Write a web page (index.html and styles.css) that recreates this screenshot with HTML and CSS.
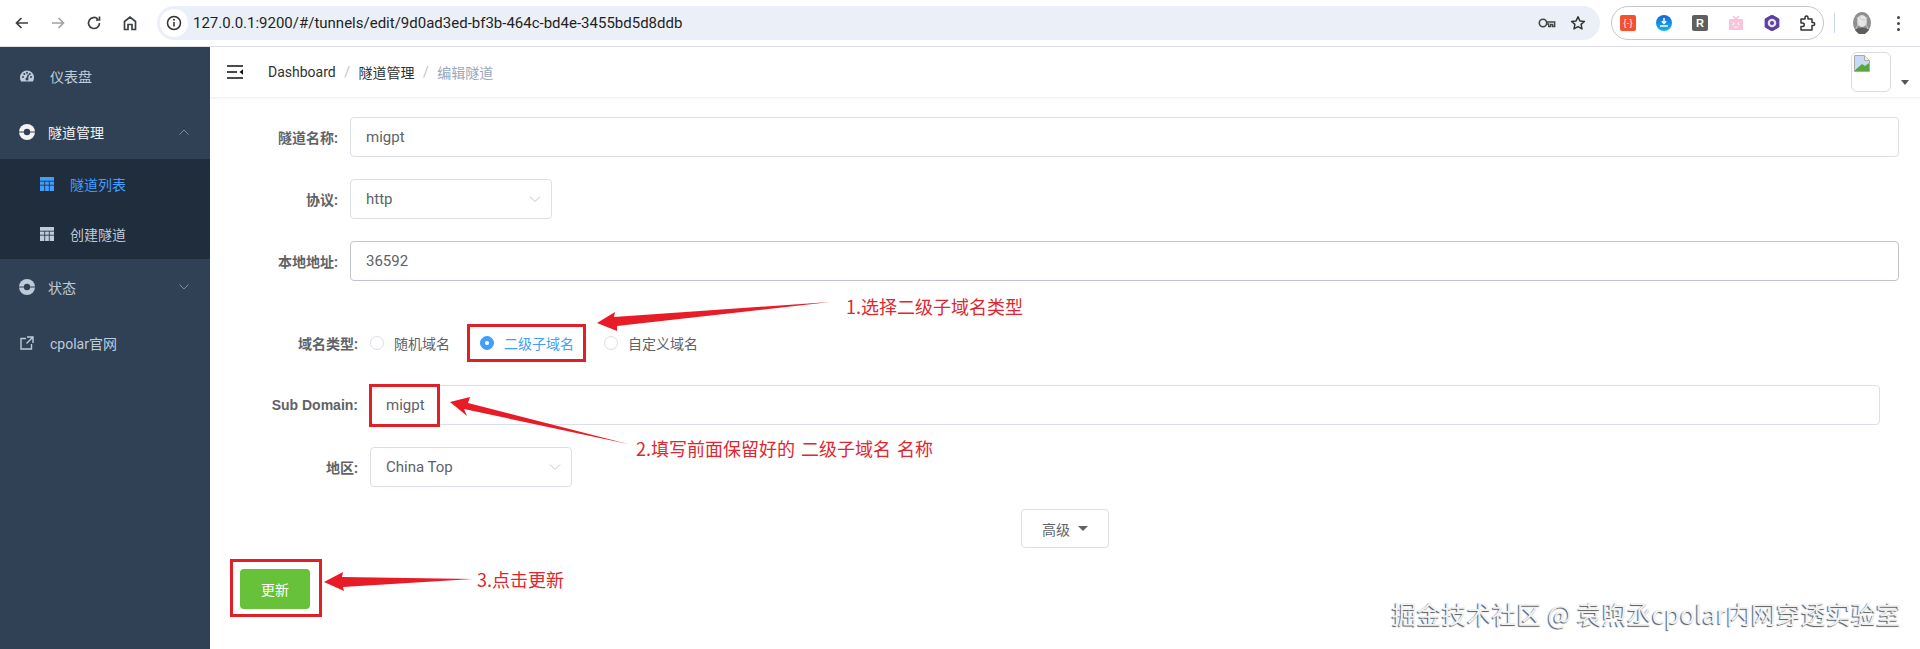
FILE: index.html
```html
<!DOCTYPE html>
<html lang="zh">
<head>
<meta charset="utf-8">
<title>cpolar</title>
<link rel="stylesheet" href="styles.css">
</head>
<body>
<div class="toolbar">
  <div class="nav-btn"><svg width="16" height="16" viewBox="0 0 16 16" class="ic"><path d="M14 8H2.500M7.500 3L2.500 8l5 5"/></svg></div>
  <div class="nav-btn dim"><svg width="16" height="16" viewBox="0 0 16 16" class="ic"><path d="M2 8h11.500M8.500 3l5 5-5 5"/></svg></div>
  <div class="nav-btn"><svg width="16" height="16" viewBox="0 0 16 16" class="ic"><path d="M13.500 8a5.500 5.500 0 1 1-1.700-4M13.500 1.500V5H10"/></svg></div>
  <div class="nav-btn"><svg width="16" height="16" viewBox="0 0 16 16" class="ic"><path d="M2.500 14.500V6.500L8 2l5.500 4.500v8H10V9.500H6v5z"/></svg></div>
  <div class="address">
    <div class="info-chip"><svg width="16" height="16" viewBox="0 0 16 16"><circle cx="8" cy="8" r="6.500" fill="none" stroke="#333" stroke-width="1.500"/><path d="M8 7v4.500" stroke="#333" stroke-width="1.600"/><circle cx="8" cy="4.800" r="1" fill="#333"/></svg></div>
    <span class="url">127.0.0.1:9200/#/tunnels/edit/9d0ad3ed-bf3b-464c-bd4e-3455bd5d8ddb</span>
    <svg class="key" width="18" height="14" viewBox="0 0 18 14"><circle cx="5" cy="7" r="3.700" fill="none" stroke="#444" stroke-width="1.600"/><path d="M8.700 6h8v4.500h-2V8.500h-2v2h-2V8h-2" fill="none" stroke="#444" stroke-width="1.400"/></svg>
    <svg class="star" width="16" height="16" viewBox="0 0 16 16"><path d="M8 1.800l1.900 4.100 4.500.5-3.300 3 .9 4.500L8 11.600l-4 2.300.9-4.500-3.300-3 4.500-.5z" fill="none" stroke="#333" stroke-width="1.500" stroke-linejoin="round"/></svg>
  </div>
  <div class="ext-pill">
    <div class="ext ext-red">{-}</div>
    <svg class="ext-svg" width="16" height="16" viewBox="0 0 16 16"><defs><linearGradient id="bl" x1="0" y1="0" x2="0" y2="1"><stop offset="0" stop-color="#1a66d8"/><stop offset="1" stop-color="#12b4f4"/></linearGradient></defs><circle cx="8" cy="8" r="8" fill="url(#bl)"/><path d="M8 3v5M5.800 6.200L8 8.500l2.200-2.300M4 11h8" stroke="#fff" stroke-width="1.500" fill="none"/></svg>
    <div class="ext ext-gray">R</div>
    <svg class="ext-svg" width="16" height="16" viewBox="0 0 16 16"><path d="M5 1l3 3 3-3" fill="none" stroke="#f6bcd2" stroke-width="1.300"/><rect x="1" y="4" width="14" height="11" rx="1.500" fill="#f9c4d8"/><path d="M4.500 7.500l2 1.200-2 1.200M11.500 7.500l-2 1.200 2 1.200M6 12h4" stroke="#fff" stroke-width="1" fill="none"/></svg>
    <svg class="ext-svg" width="16" height="16" viewBox="0 0 16 16"><path d="M8 0l6.900 4v8L8 16l-6.900-4V4z" fill="#5b3fa0" stroke="#5b3fa0" stroke-linejoin="round"/><circle cx="8" cy="8" r="4.300" fill="#e8e2f4"/><circle cx="8" cy="8" r="2" fill="#5b3fa0"/></svg>
    <svg class="ext-svg" width="16" height="16" viewBox="0 0 16 16"><path d="M1 4h4V2.500a1.500 1.500 0 0 1 3 0V4h4v3.500h1.200a1.500 1.500 0 0 1 0 3H12V15H1v-3.500h1.500a1.500 1.500 0 0 0 0-3.500H1z" fill="none" stroke="#333" stroke-width="1.500" stroke-linejoin="round"/></svg>
  </div>
  <div class="divider"></div>
  <svg class="avatar" width="20" height="24" viewBox="0 0 20 24"><ellipse cx="10" cy="12" rx="9" ry="11" fill="#8f8f8f"/><ellipse cx="10" cy="10" rx="5" ry="6" fill="#e6e6e6"/><path d="M3 19c2-3 12-3 14 0l-4 4H7z" fill="#5d5d5d"/><path d="M5 6c2 6 0 10-1 12M15 6c-2 6 0 10 1 12M7 5c1 3 3 4 6 4" stroke="#c9c9c9" fill="none"/></svg>
  <div class="kebab"><i></i><i></i><i></i></div>
</div>

<div class="app">
  <aside class="sidebar">
    <div class="menu-item">
      <svg class="mi" width="14" height="14" viewBox="0 0 14 14"><path d="M7 1.500a7 7 0 0 0-7 7c0 1.500.4 2.900 1.100 4h11.800c.7-1.100 1.100-2.500 1.100-4a7 7 0 0 0-7-7z" fill="#bfcbd9"/><g fill="#304156"><circle cx="3" cy="8" r="1"/><circle cx="4.300" cy="5" r="1"/><circle cx="7" cy="3.800" r="1"/><circle cx="11" cy="8" r="1"/><circle cx="9.800" cy="5" r="1"/></g><path d="M7 10l1.500-4.500" stroke="#304156" stroke-width="1.500"/><circle cx="7" cy="10" r="1.500" fill="#304156"/></svg>
      <span class="mi-text">仪表盘</span>
    </div>
    <div class="menu-item parent active-parent">
      <svg class="mi ring" width="16" height="16" viewBox="0 0 16 16"><circle cx="8" cy="8" r="8" fill="#f4f4f5"/><circle cx="8" cy="8" r="3.200" fill="#304156"/><path d="M0 8h5M11 8h5" stroke="#304156" stroke-width="1"/></svg>
      <span class="mi-text strong">隧道管理</span>
      <svg class="chev" width="12" height="8" viewBox="0 0 12 8"><path d="M1.500 6.500L6 2l4.500 4.500" fill="none" stroke="#7f8c9c" stroke-width="1"/></svg>
    </div>
    <div class="submenu">
      <div class="sub-item active">
        <svg class="si" width="14" height="14" viewBox="0 0 14 14"><rect width="14" height="14" fill="#409eff"/><path d="M0 4.200h14M0 8.200h14M4.700 4v10M9.300 4v10" stroke="#1f2d3d" stroke-width=".8"/></svg>
        <span>隧道列表</span>
      </div>
      <div class="sub-item">
        <svg class="si" width="14" height="14" viewBox="0 0 14 14"><rect width="14" height="14" fill="#bfcbd9"/><path d="M0 4.200h14M0 8.200h14M4.700 4v10M9.300 4v10" stroke="#1f2d3d" stroke-width=".8"/></svg>
        <span>创建隧道</span>
      </div>
    </div>
    <div class="menu-item parent">
      <svg class="mi ring" width="16" height="16" viewBox="0 0 16 16"><circle cx="8" cy="8" r="8" fill="#bfcbd9"/><circle cx="8" cy="8" r="3.200" fill="#304156"/><path d="M0 8h5M11 8h5" stroke="#304156" stroke-width="1"/></svg>
      <span class="mi-text strong-off">状态</span>
      <svg class="chev" width="12" height="8" viewBox="0 0 12 8"><path d="M1.500 1.500L6 6l4.500-4.500" fill="none" stroke="#7f8c9c" stroke-width="1"/></svg>
    </div>
    <div class="menu-item">
      <svg class="mi" width="14" height="14" viewBox="0 0 14 14"><path d="M6 2.500H1v10.500h10.500V8M7 1h6v6M13 1L6.500 7.500" fill="none" stroke="#bfcbd9" stroke-width="1.400"/></svg>
      <span class="mi-text">cpolar官网</span>
    </div>
  </aside>

  <main class="main">
    <header class="navbar">
      <svg class="hamburger" width="16" height="14" viewBox="0 0 16 14"><path d="M0 1h16M0 7h10M0 13h16" stroke="#111" stroke-width="1.500"/><path d="M16 4.200L12.500 7l3.500 2.800z" fill="#111"/></svg>
      <nav class="crumbs">
        <span>Dashboard</span><i>/</i><span>隧道管理</span><i>/</i><span class="last">编辑隧道</span>
      </nav>
      <div class="user">
        <div class="user-img">
          <svg width="16" height="17" viewBox="0 0 16 17"><path d="M.5.500h10l5 5v11H.5z" fill="#fff" stroke="#a9a9a9"/><path d="M1 1h9v5h5v3L8 14H1z" fill="#c6dcf5"/><path d="M1 15l7-6 3 2 4-3v8H1z" fill="#5aa83c"/><path d="M10.500.500v5h5" fill="#eee" stroke="#a9a9a9"/></svg>
        </div>
        <span class="user-caret"></span>
      </div>
    </header>

    <form class="form">
      <div class="row">
        <label class="lbl">隧道名称:</label>
        <div class="input">migpt</div>
      </div>
      <div class="row">
        <label class="lbl">协议:</label>
        <div class="input select">http<svg class="sel-chev" width="12" height="8" viewBox="0 0 12 8"><path d="M1 1.500L6 6.500l5-5" fill="none" stroke="#c0c4cc" stroke-width="1"/></svg></div>
      </div>
      <div class="row">
        <label class="lbl">本地地址:</label>
        <div class="input hover">36592</div>
      </div>
      <div class="row radio-row">
        <label class="lbl wide">域名类型:</label>
        <div class="radios">
          <span class="radio"><i class="dot"></i>随机域名</span>
          <span class="radio on"><i class="dot"></i>二级子域名</span>
          <span class="radio"><i class="dot"></i>自定义域名</span>
        </div>
      </div>
      <div class="row wide-row">
        <label class="lbl wide bold">Sub Domain:</label>
        <div class="input">migpt</div>
      </div>
      <div class="row wide-row">
        <label class="lbl wide">地区:</label>
        <div class="input select sel-wide">China Top<svg class="sel-chev" width="12" height="8" viewBox="0 0 12 8"><path d="M1 1.500L6 6.500l5-5" fill="none" stroke="#c0c4cc" stroke-width="1"/></svg></div>
      </div>
      <div class="adv-wrap">
        <div class="adv">高级<span class="adv-caret"></span></div>
      </div>
      <div class="submit-wrap"><div class="submit">更新</div></div>
    </form>
  </main>
</div>

<svg class="marks" width="1920" height="649" viewBox="0 0 1920 649">
  <g fill="none" stroke="#e01f26" stroke-width="3">
    <rect x="468.500" y="325.500" width="116" height="35"/>
    <rect x="370.500" y="385.500" width="68" height="40"/>
    <rect x="231.500" y="560.500" width="89" height="55"/>
  </g>
  <g fill="#e81c26">
    <polygon points="597,323 615,312 614,317 830,302 617,326 617,331"/>
    <polygon points="450,402 470,397 468,403 628,444 464,409 467,416"/>
    <polygon points="324,582 343,572 342,577 473,579 343,587 344,591"/>
  </g>
</svg>
<div class="note note1">1.选择二级子域名类型</div>
<div class="note note2">2.填写前面保留好的 二级子域名 名称</div>
<div class="note note3">3.点击更新</div>
<div class="watermark">掘金技术社区 @ 袁煦丞cpolar内网穿透实验室</div>
</body>
</html>
```
FILE: styles.css
```css
* { box-sizing: border-box; }
html, body { margin: 0; height: 649px; overflow: hidden; }
body {
  position: relative;
  background: #fff;
  font-family: Roboto, "Noto Sans CJK SC", sans-serif;
  font-size: 14px;
  color: #606266;
}

/* browser toolbar */
.toolbar {
  height: 47px;
  display: flex;
  align-items: center;
  padding-left: 4px;
  background: #fff;
  border-bottom: 1px solid #dcdfe4;
}
.nav-btn { width: 36px; display: flex; justify-content: center; }
.ic { fill: none; stroke: #3c4043; stroke-width: 1.700; }
.dim .ic { stroke: #a0a4a8; }
.address {
  margin-left: 9px;
  width: 1443px;
  height: 34px;
  border-radius: 17px;
  background: #ebf0f8;
  display: flex;
  align-items: center;
}
.info-chip {
  width: 28px; height: 28px; margin-left: 3px;
  border-radius: 50%; background: #fff;
  display: flex; align-items: center; justify-content: center;
}
.url { margin-left: 5px; color: #1f1f1f; font-size: 15px; }
.key { margin-left: auto; }
.star { margin-left: 14px; margin-right: 14px; }
.ext-pill {
  margin-left: 11px;
  width: 213px; height: 34px;
  border: 1px solid #c4c7cb;
  border-radius: 17px;
  display: flex;
  align-items: center;
  gap: 20px;
  padding-left: 8px;
}
.ext {
  width: 16px; height: 16px; border-radius: 2px;
  display: flex; align-items: center; justify-content: center;
  color: #fff; font-size: 10px; font-family: "Liberation Sans", sans-serif;
}
.ext-red { background: #f4512c; font-size: 9px; }
.ext-gray { background: #5f5f5f; font-weight: 700; font-size: 11px; }
.ext-svg { display: block; }
.divider { width: 1px; height: 20px; margin-left: 10px; background: #c9d7ea; }
.avatar { margin-left: 17px; }
.kebab { margin-left: 25px; display: flex; flex-direction: column; gap: 3px; }
.kebab i { width: 3px; height: 3px; border-radius: 50%; background: #444; }

/* app */
.app { display: flex; height: 602px; }
.sidebar { width: 210px; flex: none; background: #304156; padding-top: 1px; }
.menu-item {
  height: 56px;
  display: flex;
  align-items: center;
  padding-left: 20px;
  color: #bfcbd9;
  position: relative;
}
.menu-item.active-parent { height: 55px; }
.mi { flex: none; }
.ring { margin-left: -1px; }
.mi-text { margin-left: 16px; }
.strong, .strong-off { margin-left: 13px; }
.strong { color: #f4f4f5; }
.chev { margin-left: auto; margin-right: 20px; }
.submenu { background: #1f2d3d; }
.sub-item {
  height: 50px;
  display: flex;
  align-items: center;
  padding-left: 40px;
  color: #bfcbd9;
  gap: 16px;
}
.sub-item.active { color: #409eff; }

.main { flex: 1; min-width: 0; }
.navbar {
  height: 51px;
  display: flex;
  align-items: center;
  padding-left: 17px;
  border-bottom: 1px solid #f0f2f5;
  box-shadow: 0 1px 3px rgba(0, 21, 41, .04);
}
.hamburger { flex: none; }
.crumbs { margin-left: 25px; display: flex; align-items: center; color: #303133; }
.crumbs i { font-style: normal; color: #c0c4cc; margin: 0 8.500px; }
.crumbs .last { color: #97a8be; }
.user { margin-left: auto; display: flex; align-items: flex-end; padding-right: 11px; height: 40px; }
.user-img {
  width: 40px; height: 40px;
  border: 1px solid #dcdcdc;
  border-radius: 6px;
  padding: 2px 0 0 2px;
}
.user-img svg { display: block; }
.user-caret {
  margin-left: 10px; margin-bottom: 7px;
  border: 4px solid transparent; border-top: 5px solid #555; border-bottom: 0;
}

/* form */
.form { padding-top: 19px; }
.row { display: flex; align-items: center; height: 40px; margin-bottom: 22px; padding-right: 21px; }
.lbl { width: 140px; flex: none; padding-right: 12px; text-align: right; font-weight: 700; color: #606266; font-size: 14px; white-space: nowrap; }
.lbl.wide { width: 160px; }
.lbl.bold { font-family: "Liberation Sans", sans-serif; font-size: 14px; }
.input {
  flex: 1;
  height: 40px;
  line-height: 38px;
  border: 1px solid #dcdfe6;
  border-radius: 4px;
  padding-left: 15px;
  color: #606266;
  font-size: 15px;
  background: #fff;
}
.input.hover { border-color: #c0c4cc; }
.select { flex: none; width: 202px; position: relative; }
.sel-chev { position: absolute; right: 10px; top: 15px; }
.wide-row { padding-right: 40px; }
.radio-row { margin-top: 42px; }
.radios { display: flex; gap: 30px; }
.radio { display: flex; align-items: center; gap: 10px; font-size: 14px; color: #606266; }
.dot {
  width: 14px; height: 14px; border-radius: 50%;
  border: 1px solid #dcdfe6; background: #fff;
}
.radio.on { color: #409eff; }
.radio.on .dot { background: #409eff; border-color: #409eff; position: relative; }
.radio.on .dot::after {
  content: ""; position: absolute; left: 4px; top: 4px;
  width: 4px; height: 4px; border-radius: 50%; background: #fff;
}
.adv-wrap { display: flex; justify-content: flex-start; padding-left: 811px; }
.adv {
  width: 88px; height: 39px;
  border: 1px solid #dcdfe6; border-radius: 4px;
  display: flex; align-items: center; justify-content: center;
  font-size: 14px; color: #606266;
}
.adv-caret { margin-left: 8px; border: 5px solid transparent; border-top: 5px solid #606266; border-bottom: 0; }
.submit-wrap { padding: 21px 0 0 30px; }
.submit {
  width: 70px; height: 40px;
  border-radius: 4px;
  background: #67c23a;
  color: #fff;
  display: flex; align-items: center; justify-content: center;
  font-size: 14px;
}

/* annotations drawn over the screenshot */
.marks { position: absolute; left: 0; top: 0; pointer-events: none; }
.note { position: absolute; color: #e0262e; font-size: 18px; line-height: 24px; white-space: nowrap; font-family: "Noto Sans CJK SC", sans-serif; word-spacing: 2px; }
.note1 { left: 846px; top: 294px; }
.note2 { left: 636px; top: 436px; }
.note3 { left: 477px; top: 567px; }
.watermark {
  position: absolute; right: 19px; top: 596px;
  font-size: 25px; line-height: 34px; white-space: nowrap;
  color: #f2f2f2;
  text-shadow: -1px 1px 1px #555;
  font-family: "Noto Sans CJK SC", sans-serif;
}
```
